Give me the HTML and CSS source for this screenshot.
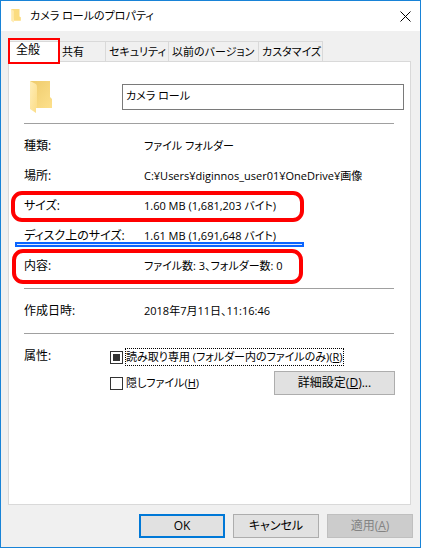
FILE: index.html
```html
<!DOCTYPE html>
<html lang="ja">
<head>
  <meta charset="UTF-8">
  <meta name="viewport" content="width=device-width, initial-scale=1.0">
  <title>カメラ ロールのプロパティ</title>
  <link rel="stylesheet" href="styles.css">
</head>
<body>
  <main class="window">
    <header class="titlebar">
      <svg class="title-icon" viewBox="0 0 22 32" aria-hidden="true">
        <path d="M0 0h19v17l3 2v8H6z" fill="#fbdc80"/>
        <path d="M0 0l6 4v27l-6-4z" fill="#ffeaae"/>
      </svg>
      <h1>カメラ ロールのプロパティ</h1>
      <button class="close" type="button" aria-label="閉じる">
        <svg viewBox="0 0 11 11" aria-hidden="true"><path d="M.5.5l10 10M10.5.5l-10 10" stroke="#000" fill="none"/></svg>
      </button>
    </header>

    <form class="content">
      <div class="tabs" role="tablist">
        <button class="tab active" type="button" role="tab" aria-selected="true">全般</button>
        <button class="tab" type="button" role="tab">共有</button>
        <button class="tab" type="button" role="tab">セキュリティ</button>
        <button class="tab" type="button" role="tab">以前のバージョン</button>
        <button class="tab" type="button" role="tab">カスタマイズ</button>
      </div>

      <section class="panel" role="tabpanel" aria-label="全般">
        <div class="name-row">
          <svg class="folder" viewBox="0 0 22 32" aria-hidden="true">
            <defs>
              <linearGradient id="back" x2="1" y2="1">
                <stop offset="0" stop-color="#eecb6c"/>
                <stop offset="1" stop-color="#fde08c"/>
              </linearGradient>
              <linearGradient id="front" x2="1" y2="1">
                <stop offset="0" stop-color="#ffeeb8"/>
                <stop offset="1" stop-color="#fbdc86"/>
              </linearGradient>
            </defs>
            <path d="M0 0h20v16l2 2v9H5z" fill="url(#back)"/>
            <path d="M0 0l6 3q1 1 1 3v20l-1 1v5l-6-4z" fill="url(#front)"/>
          </svg>
          <input class="name" type="text" value="カメラ ロール" aria-label="フォルダー名">
        </div>

        <!-- フォルダー情報 -->
        <dl class="info">
          <div class="row"><dt>種類:</dt><dd>ファイル フォルダー</dd></div>
          <div class="row"><dt>場所:</dt><dd>C:¥Users¥diginnos_user01¥OneDrive¥画像</dd></div>
          <div class="row mark-size"><dt>サイズ:</dt><dd>1.60 MB (1,681,203 バイト)</dd></div>
          <div class="row mark-line"><dt>ディスク上のサイズ:</dt><dd>1.61 MB (1,691,648 バイト)</dd></div>
          <div class="row mark-count"><dt>内容:</dt><dd>ファイル数: 3、フォルダー数: 0</dd></div>
        </dl>
        <dl class="info created">
          <div class="row"><dt>作成日時:</dt><dd>2018年7月11日、11:16:46</dd></div>
        </dl>

        <!-- 属性 -->
        <div class="attributes" role="group" aria-labelledby="attr">
          <span id="attr">属性:</span>
          <div class="options">
            <div class="option">
              <input type="checkbox" id="readonly">
              <label class="focused" for="readonly">読み取り専用 (フォルダー内のファイルのみ)(<u>R</u>)</label>
            </div>
            <div class="option">
              <input type="checkbox" id="hidden">
              <label for="hidden">隠しファイル(<u>H</u>)</label>
              <button class="button detail" type="button">詳細設定(<u>D</u>)...</button>
            </div>
          </div>
        </div>
      </section>

      <footer class="actions">
        <button class="button ok" type="button">OK</button>
        <button class="button" type="button">キャンセル</button>
        <button class="button" type="button" disabled>適用(<u>A</u>)</button>
      </footer>
    </form>
  </main>

  <script>
    document.getElementById('readonly').indeterminate = true;
  </script>
</body>
</html>
```
FILE: styles.css
```css
*, *::after {
  box-sizing: border-box;
}
body {
  margin: 0;
  font: 12px/16px "Open Sans", "Noto Sans CJK JP", sans-serif;
  font-feature-settings: "palt";
  color: #000;
}
button, input {
  font: inherit;
  font-feature-settings: inherit;
  color: inherit;
}
.window {
  display: flex;
  flex-direction: column;
  min-height: 100vh;
  background: #f0f0f0;
  border: 1px solid #1883d7;
}
.titlebar {
  display: flex;
  align-items: center;
  height: 30px;
  padding: 0 9px 0 10px;
  background: #fff;
}
.title-icon {
  width: 10px;
  height: 14px;
}
h1 {
  flex: 1;
  margin: 0 0 0 9px;
  font-size: 11px;
  font-weight: normal;
}
.close {
  display: flex;
  padding: 0;
  border: 0;
  background: none;
}
.close svg {
  width: 11px;
  height: 11px;
}
.content {
  display: flex;
  flex: 1;
  flex-direction: column;
  padding: 10px 7px 9px;
}

/* tabs */
.tabs {
  display: grid;
  grid-template-columns: 51px 47px 63px 90px 64px;
  height: 20px;
}
.tab {
  padding: 0 0 0 3px;
  font-size: 11px;
  text-align: left;
  white-space: nowrap;
  background: #f0f0f0;
  border: 1px solid #d9d9d9;
  border-width: 1px 1px 0 0;
}
.tab.active {
  position: relative;
  padding: 0 0 4px 8px;
  font-size: 12px;
  background: #fff;
}
.tab.active::after {
  content: "";
  position: absolute;
  inset: -4px -2px -2px 0;
  border: 2px solid #f00;
}

/* panel */
.panel {
  flex: 1;
  margin-right: 2px;
  padding: 22px 6px 0 15px;
  background: #fff;
  border: 1px solid #d9d9d9;
}
.name-row {
  display: flex;
  align-items: flex-start;
  height: 39px;
}
.folder {
  width: 22px;
  height: 32px;
  margin: -3px 70px 0 6px;
}
.name {
  flex: 1;
  min-width: 0;
  height: 26px;
  padding: 0 4px 4px 3px;
  font-size: 11px;
  background: #fff;
  border: 1px solid #7a7a7a;
}
.info {
  margin: 0 10px 0 0;
  padding: 7px 0;
  border-top: 1px solid #a0a0a0;
}
.row {
  position: relative;
  display: grid;
  grid-template-columns: 120px 1fr;
  align-items: center;
  height: 30px;
}
.created {
  padding: 7px 0;
  border-bottom: 1px solid #a0a0a0;
}
dt {
  white-space: nowrap;
}
dd {
  margin: 0;
  font-size: 11px;
  white-space: nowrap;
}
.mark-size::after, .mark-count::after {
  content: "";
  position: absolute;
  inset: 0 90px -1px -13px;
  border: 4px solid #f00;
  border-radius: 11px;
}
.mark-count::after {
  inset: -2px 91px -3px -12px;
}
.mark-line::after {
  content: "";
  position: absolute;
  inset: auto 90px 4px -9px;
  height: 5px;
  background: #dde8fb;
  border: 2px solid #0a64ff;
}

/* attributes */
.attributes {
  display: grid;
  grid-template-columns: 86px 1fr;
  margin: 14px 9px 0 0;
}
.options {
  font-size: 11px;
}
.option {
  display: flex;
  align-items: center;
  height: 24px;
  white-space: nowrap;
}
.option:first-child {
  height: 18px;
  margin-bottom: 5px;
}
.option label {
  border: 1px solid transparent;
}
.option label.focused {
  border: 1px dotted #000;
}
.option input {
  appearance: none;
  flex: none;
  width: 13px;
  height: 13px;
  margin: 0 2px 0 0;
  background: #fff;
  border: 1px solid #333;
}
.option input:indeterminate {
  background: #333;
  box-shadow: inset 0 0 0 2px #fff;
}
.button {
  width: 86px;
  height: 24px;
  padding: 0;
  font-size: 12px;
  line-height: 16px;
  background: #e1e1e1;
  border: 1px solid #adadad;
}
.detail {
  width: 121px;
  margin-left: auto;
}
.actions {
  display: flex;
  justify-content: flex-end;
  gap: 8px;
  margin-top: 9px;
}
.ok {
  border: 2px solid #0078d7;
}
.button:disabled {
  color: #838383;
  background: #ccc;
  border-color: #bfbfbf;
}
```
